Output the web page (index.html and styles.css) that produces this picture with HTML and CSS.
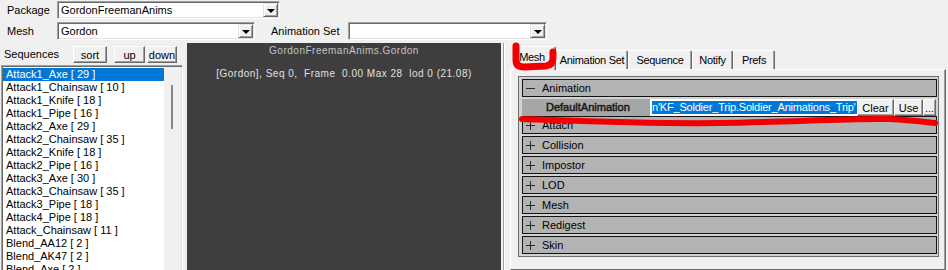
FILE: index.html
```html
<!DOCTYPE html>
<html lang="en">
<head>
    <meta charset="UTF-8">
    <title>Animation Browser</title>
    <link rel="stylesheet" href="styles.css">
</head>
<body>
    <div class="window">
        <div class="toolbar">
            <div class="tool-row">
                <span class="tool-label">Package</span>
                <div class="combo combo-package">
                    <span class="combo-text">GordonFreemanAnims</span>
                    <span class="combo-btn"></span>
                </div>
            </div>
            <div class="tool-row">
                <span class="tool-label">Mesh</span>
                <div class="combo combo-mesh">
                    <span class="combo-text">Gordon</span>
                    <span class="combo-btn"></span>
                </div>
                <span class="tool-label anim-label">Animation Set</span>
                <div class="combo combo-animset">
                    <span class="combo-text"></span>
                    <span class="combo-btn"></span>
                </div>
            </div>
        </div>

        <div class="main">
            <div class="seq-pane">
                <div class="seq-header">
                    <span class="seq-title">Sequences</span>
                    <button class="btn btn-sort">sort</button>
                    <button class="btn btn-up">up</button>
                    <button class="btn btn-down">down</button>
                </div>
                <div class="seq-list">
                    <ul class="seq-items">
                        <li class="sel">Attack1_Axe [ 29 ]</li>
                        <li>Attack1_Chainsaw [ 10 ]</li>
                        <li>Attack1_Knife [ 18 ]</li>
                        <li>Attack1_Pipe [ 16 ]</li>
                        <li>Attack2_Axe [ 29 ]</li>
                        <li>Attack2_Chainsaw [ 35 ]</li>
                        <li>Attack2_Knife [ 18 ]</li>
                        <li>Attack2_Pipe [ 16 ]</li>
                        <li>Attack3_Axe [ 30 ]</li>
                        <li>Attack3_Chainsaw [ 35 ]</li>
                        <li>Attack3_Pipe [ 18 ]</li>
                        <li>Attack4_Pipe [ 18 ]</li>
                        <li>Attack_Chainsaw [ 11 ]</li>
                        <li>Blend_AA12 [ 2 ]</li>
                        <li>Blend_AK47 [ 2 ]</li>
                        <li>Blend_Axe [ 2 ]</li>
                    </ul>
                    <div class="scrollbar"><div class="thumb"></div></div>
                </div>
            </div>

            <div class="viewport">
                <div class="vp-title">GordonFreemanAnims.Gordon</div>
                <div class="vp-status">[Gordon], Seq 0,  Frame  0.00 Max 28  lod 0 (21.08)</div>
            </div>

            <div class="props-pane">
                <div class="tab-strip">
                    <span class="tab active tab-mesh">Mesh</span>
                    <span class="tab tab-animset">Animation Set</span>
                    <span class="tab tab-seq">Sequence</span>
                    <span class="tab tab-notify">Notify</span>
                    <span class="tab tab-prefs">Prefs</span>
                </div>
                <div class="tab-body">
                    <div class="prop-frame">
                        <div class="cat"><span class="sign"></span>Animation</div>
                        <div class="prop-row">
                            <span class="prop-name">DefaultAnimation</span>
                            <span class="prop-value"><span>n'KF_Soldier_Trip.Soldier_Animations_Trip'</span></span>
                            <button class="prop-btn btn-clear">Clear</button>
                            <button class="prop-btn btn-use">Use</button>
                            <button class="prop-btn btn-more">...</button>
                        </div>
                        <div class="cat"><span class="sign plus"></span>Attach</div>
                        <div class="cat"><span class="sign plus"></span>Collision</div>
                        <div class="cat"><span class="sign plus"></span>Impostor</div>
                        <div class="cat"><span class="sign plus"></span>LOD</div>
                        <div class="cat"><span class="sign plus"></span>Mesh</div>
                        <div class="cat"><span class="sign plus"></span>Redigest</div>
                        <div class="cat"><span class="sign plus"></span>Skin</div>
                    </div>
                </div>
            </div>
        </div>

        <!-- red hand-drawn marks over the screenshot -->
        <svg class="marks" width="948" height="270" viewBox="0 0 948 270">
            <path class="hook" d="M516,46 L516,60 Q516,67 524,67 L546,66 Q553,65 553,58 L553,52" />
            <path d="M522,119 C580,121 650,124 720,123 C790,122 850,118 890,119 C910,120 925,122 935,123" />
        </svg>
    </div>
</body>
</html>
```

FILE: styles.css
```css
* {
    box-sizing: border-box;
}

body {
    margin: 0;
    background: #f0f0f0;
    font-family: "Liberation Sans", Arial, sans-serif;
    font-size: 11px;
    color: #000;
}

.window {
    position: relative;
    width: 948px;
    height: 270px;
    overflow: hidden;
}

/* top bar */
.toolbar {
    height: 43px;
}

.tool-row {
    display: flex;
    height: 21px;
    padding-top: 1px;
}

.tool-label {
    width: 57px;
    padding-left: 7px;
    line-height: 18px;
    white-space: nowrap;
}

.anim-label {
    width: 77px;
    margin-left: 16px;
    padding-left: 0;
}

.combo {
    display: flex;
    height: 18px;
    padding: 1px;
    background: #fff;
    border: 1px solid;
    border-color: #a0a0a0 #fff #fff #a0a0a0;
    box-shadow: inset 1px 1px #696969, inset -1px -1px #e3e3e3;
}

.combo-package { width: 223px; }
.combo-mesh { width: 198px; }
.combo-animset { width: 199px; }

.combo-text {
    flex: 1;
    padding-left: 2px;
    line-height: 14px;
    white-space: nowrap;
    overflow: hidden;
}

.combo-btn {
    width: 15px;
    display: flex;
    align-items: center;
    justify-content: center;
    background: #f0f0f0;
    border: 1px solid;
    border-color: #e3e3e3 #696969 #696969 #e3e3e3;
    box-shadow: inset 1px 1px #fff, inset -1px -1px #a0a0a0;
}

.combo-btn::after {
    content: '';
    border-left: 4px solid transparent;
    border-right: 4px solid transparent;
    border-top: 4px solid #000;
    margin-top: 1px;
}

/* main area */
.main {
    display: flex;
    height: 227px;
}

.seq-pane {
    width: 187px;
    flex-shrink: 0;
}

.seq-header {
    display: flex;
    height: 22px;
    padding-top: 3px;
}

.seq-title {
    width: 73px;
    padding-left: 4px;
    line-height: 17px;
}

.btn {
    height: 17px;
    padding: 0;
    font: inherit;
    color: #000;
    line-height: 14px;
    text-align: center;
    background: #f0f0f0;
    border: 1px solid;
    border-color: #fff #696969 #696969 #fff;
    box-shadow: inset -1px -1px #a0a0a0;
}

.btn-sort { width: 34px; margin-right: 7px; }
.btn-up { width: 31px; margin-right: 2px; }
.btn-down { width: 30px; }

.seq-list {
    display: flex;
    width: 182px;
    height: 210px;
    margin-left: 1px;
    padding: 1px;
    border: 1px solid;
    border-color: #a0a0a0 #fff #fff #a0a0a0;
    box-shadow: inset 1px 1px #696969, inset -1px -1px #e3e3e3;
    background: #f0f0f0;
}

.seq-items {
    width: 161px;
    margin: 0;
    padding: 1px 0 0 0;
    list-style: none;
    background: #fff;
}

.seq-items li {
    line-height: 13px;
    padding-left: 3px;
    white-space: nowrap;
}

.seq-items li.sel {
    background: #0078d7;
    color: #fff;
}

.scrollbar {
    width: 17px;
    background: #f0f0f0;
}

.thumb {
    width: 2px;
    height: 44px;
    margin: 18px 0 0 7px;
    background: #868686;
}

/* preview */
.viewport {
    width: 314px;
    flex-shrink: 0;
    background: #3e3e3e;
    color: #d2d2d2;
    text-align: center;
    font-size: 10px;
    letter-spacing: 0.5px;
}

.vp-title {
    margin-top: 2px;
    line-height: 12px;
    color: #c4c4c4;
}

.vp-status {
    margin-top: 11px;
    line-height: 12px;
    color: #e0e0e0;
    white-space: pre;
}

/* property pane */
.props-pane {
    flex: 1;
    display: flex;
    flex-direction: column;
    margin-left: 2px;
    padding: 3px 2px 0 6px;
    border-left: 1px solid #a0a0a0;
    box-shadow: inset 1px 0 #fff;
}

.tab-strip {
    display: flex;
    align-items: flex-end;
    height: 23px;
    margin-left: 3px;
}

.tab {
    height: 19px;
    line-height: 18px;
    text-align: center;
    white-space: nowrap;
    letter-spacing: -0.3px;
    border-top: 1px solid #fff;
    border-left: 1px solid #fff;
    border-right: 1px solid #696969;
    border-radius: 2px 2px 0 0;
    box-shadow: inset -1px 0 #a0a0a0;
}

.tab.active {
    position: relative;
    z-index: 1;
    height: 24px;
    margin-bottom: -1px;
    line-height: 20px;
    padding-right: 5px;
    background: #f0f0f0;
}

.tab-mesh { width: 43px; }
.tab-animset { width: 72px; }
.tab-seq { width: 64px; }
.tab-notify { width: 41px; }
.tab-prefs { width: 42px; }

.tab-body {
    flex: 1;
    padding: 6px 6px 0 7px;
    border: 1px solid;
    border-color: #fff #696969 #696969 #fff;
    box-shadow: inset -1px 0 #a0a0a0;
}

.prop-frame {
    padding: 2px 1px 0 3px;
    border: 1px solid #6e6e6e;
    background: #d2d2d2;
}

.cat {
    display: flex;
    align-items: center;
    height: 18px;
    margin-bottom: 2px;
    border: 1px solid #141414;
    background: #b3b3b3;
    white-space: nowrap;
}

.sign {
    position: relative;
    width: 9px;
    height: 9px;
    margin: 0 7px 0 3px;
}

.sign::before {
    content: '';
    position: absolute;
    left: 0;
    top: 4px;
    width: 9px;
    height: 1px;
    background: #2a2a2a;
}

.sign.plus::after {
    content: '';
    position: absolute;
    left: 4px;
    top: 0;
    width: 1px;
    height: 9px;
    background: #2a2a2a;
}

.prop-row {
    display: flex;
    height: 17px;
}

.prop-name {
    width: 128px;
    padding-left: 24px;
    line-height: 17px;
    background: #a6a6a6;
    color: #1a1a1a;
    -webkit-text-stroke: 0.5px #1a1a1a;
    white-space: nowrap;
}

.prop-value {
    width: 207px;
    padding: 2px 0 2px 2px;
    background: #fff;
    overflow: hidden;
}

.prop-value span {
    display: block;
    line-height: 13px;
    letter-spacing: -0.2px;
    background: #0078d7;
    color: #fff;
    white-space: nowrap;
    overflow: hidden;
}

.prop-btn {
    height: 17px;
    padding: 0;
    font: inherit;
    color: #000;
    line-height: 14px;
    text-align: center;
    background: #f0f0f0;
    border: 1px solid;
    border-color: #fff #696969 #696969 #fff;
    box-shadow: inset -1px -1px #a0a0a0;
}

.btn-clear { width: 37px; }
.btn-use { width: 29px; }
.btn-more { width: 13px; }

/* annotation overlay */
.marks {
    position: absolute;
    left: 0;
    top: 0;
    z-index: 5;
    pointer-events: none;
}

.marks path {
    fill: none;
    stroke: #f20000;
    stroke-width: 6;
    stroke-linecap: round;
    stroke-linejoin: round;
}

.marks .hook {
    stroke-width: 7;
}
```
